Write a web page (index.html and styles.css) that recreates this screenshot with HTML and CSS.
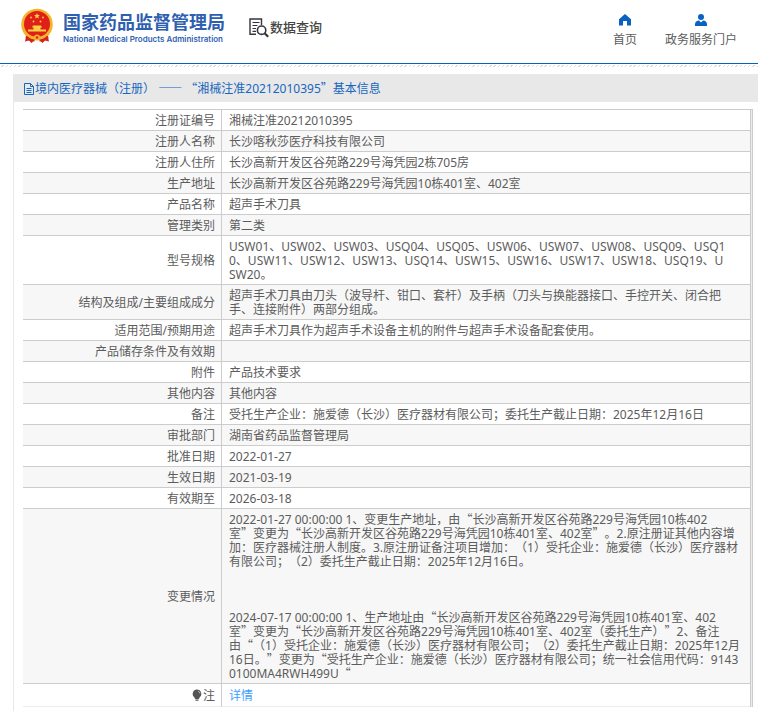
FILE: index.html
```html
<!DOCTYPE html>
<html lang="zh-CN">
<head>
    <meta charset="UTF-8">
    <meta name="viewport" content="width=device-width, initial-scale=1.0">
    <title>国家药品监督管理局 - 数据查询</title>
    <link rel="stylesheet" href="styles.css">
</head>
<body>
    <header class="header">
        <a class="logo" href="#">
            <svg class="emblem" viewBox="0 0 64 70" aria-hidden="true">
                <path d="M11 52 L8 66 L16 64 L21 69 L27 63 H37 L43 69 L48 64 L56 66 L53 52 Z" fill="#d8201c"/>
                <circle cx="32" cy="32" r="31.500" fill="#f3b32b"/>
                <circle cx="32" cy="31" r="26" fill="#de2018"/>
                <path d="M32 9 l1.600 3.800 4.200 .4 -3.200 2.800 1 4.200 -3.600 -2.200 -3.600 2.200 1 -4.200 -3.200 -2.800 4.200 -.4z" fill="#fbd043"/>
                <circle cx="20" cy="18" r="1.800" fill="#fbd043"/>
                <circle cx="44" cy="18" r="1.800" fill="#fbd043"/>
                <circle cx="25" cy="26" r="1.800" fill="#fbd043"/>
                <circle cx="39" cy="26" r="1.800" fill="#fbd043"/>
                <path d="M24 34 H40 L42 38 H22 Z M25 38 H39 V42 H50 V46 H14 V42 H25 Z" fill="#fbd043"/>
                <path d="M9 50 Q20 60 32 60 Q44 60 55 50" fill="none" stroke="#f3b32b" stroke-width="5"/>
                <circle cx="32" cy="58" r="6" fill="#f3b32b"/>
                <circle cx="32" cy="58" r="2.500" fill="#de2018"/>
                <path d="M10 56 Q18 64 27 64 M54 56 Q46 64 37 64" fill="none" stroke="#d8201c" stroke-width="4"/>
            </svg>
            <span class="logo-text">
                <span class="logo-cn">国家药品监督管理局</span>
                <span class="logo-en">National Medical Products Administration</span>
            </span>
        </a>
        <a class="search-title" href="#">
            <svg class="search-icon" viewBox="0 0 20 20" aria-hidden="true">
                <path d="M7 16.200 H1 V1 H12.500 V7" fill="none" stroke="#34343f" stroke-width="1.400"/>
                <path d="M3.500 4.500 H10.500 M3.500 7.500 H8.500 M3.500 10.500 H7 M3.500 13.300 H7" stroke="#34343f" stroke-width="1.200"/>
                <circle cx="12.600" cy="12.200" r="4.200" fill="#fff" stroke="#34343f" stroke-width="1.600"/>
                <path d="M15.600 15.200 L19.200 18.800" stroke="#34343f" stroke-width="2.200"/>
            </svg>
            <span>数据查询</span>
        </a>
        <nav class="nav">
            <a href="#">
                <svg viewBox="0 0 12 12" aria-hidden="true">
                    <path d="M6 0 L12 5.200 V11.500 H8 V7 H4 V11.500 H0 V5.200 Z" fill="#0862c1"/>
                </svg>
                <span>首页</span>
            </a>
            <a href="#">
                <svg viewBox="0 0 12 12" aria-hidden="true">
                    <circle cx="6" cy="3" r="3" fill="#0862c1"/>
                    <path d="M0 12 V10 Q.5 7 4 6.600 L6 8.500 L8 6.600 Q11.500 7 12 10 V12 Z" fill="#0862c1"/>
                </svg>
                <span>政务服务门户</span>
            </a>
        </nav>
    </header>
    <div class="hatch"></div>

    <main class="panel">
        <h1 class="panel-title">
            <svg class="doc-icon" viewBox="0 0 10 12" aria-hidden="true">
                <path d="M.5 .5 H6.500 L9.500 3.500 V11.500 H.5 Z M6.500 .5 V3.500 H9.500 M2.500 5.500 H7.500 M2.500 7.500 H7.500 M2.500 9.500 H7.500" fill="none" stroke="#1766c0" stroke-width="1"/>
            </svg>
            <span>境内医疗器械（注册） <span class="cjk">——</span> <span class="cjk">“</span>湘械注准20212010395<span class="cjk">”</span>基本信息</span>
        </h1>
        <div class="table-wrap">
            <table class="info">
                <tbody>
                    <tr><th scope="row">注册证编号</th><td>湘械注准20212010395</td></tr>
                    <tr><th scope="row">注册人名称</th><td>长沙喀秋莎医疗科技有限公司</td></tr>
                    <tr><th scope="row">注册人住所</th><td>长沙高新开发区谷苑路229号海凭园2栋705房</td></tr>
                    <tr><th scope="row">生产地址</th><td>长沙高新开发区谷苑路229号海凭园10栋401室、402室</td></tr>
                    <tr><th scope="row">产品名称</th><td>超声手术刀具</td></tr>
                    <tr><th scope="row">管理类别</th><td>第二类</td></tr>
                    <tr><th scope="row">型号规格</th><td>USW01、USW02、USW03、USQ04、USQ05、USW06、USW07、USW08、USQ09、USQ1<br>0、USW11、USW12、USW13、USQ14、USW15、USW16、USW17、USW18、USQ19、U<br>SW20。</td></tr>
                    <tr><th scope="row">结构及组成/主要组成成分</th><td>超声手术刀具由刀头（波导杆、钳口、套杆）及手柄（刀头与换能器接口、手控开关、闭合把手、连接附件）两部分组成。</td></tr>
                    <tr><th scope="row">适用范围/预期用途</th><td>超声手术刀具作为超声手术设备主机的附件与超声手术设备配套使用。</td></tr>
                    <tr><th scope="row">产品储存条件及有效期</th><td></td></tr>
                    <tr><th scope="row">附件</th><td>产品技术要求</td></tr>
                    <tr><th scope="row">其他内容</th><td>其他内容</td></tr>
                    <tr><th scope="row">备注</th><td>受托生产企业：施爱德（长沙）医疗器材有限公司；委托生产截止日期：2025年12月16日</td></tr>
                    <tr><th scope="row">审批部门</th><td>湖南省药品监督管理局</td></tr>
                    <tr><th scope="row">批准日期</th><td>2022-01-27</td></tr>
                    <tr><th scope="row">生效日期</th><td>2021-03-19</td></tr>
                    <tr><th scope="row">有效期至</th><td>2026-03-18</td></tr>
                    <tr>
                        <th scope="row">变更情况</th>
                        <td>2022-01-27 00:00:00 1、变更生产地址，由<span class="cjk">“</span>长沙高新开发区谷苑路229号海凭园10栋402<br>室<span class="cjk">”</span>变更为<span class="cjk">“</span>长沙高新开发区谷苑路229号海凭园10栋401室、402室<span class="cjk">”</span>。2.原注册证其他内容增<br>加：医疗器械注册人制度。3.原注册证备注项目增加：（1）受托企业：施爱德（长沙）医疗器材<br>有限公司；（2）委托生产截止日期：2025年12月16日。<br><br><br><br>2024-07-17 00:00:00 1、生产地址由<span class="cjk">“</span>长沙高新开发区谷苑路229号海凭园10栋401室、402<br>室<span class="cjk">”</span>变更为<span class="cjk">“</span>长沙高新开发区谷苑路229号海凭园10栋401室、402室（委托生产）<span class="cjk">”</span>2、备注<br>由<span class="cjk">“</span>（1）受托企业：施爱德（长沙）医疗器材有限公司；（2）委托生产截止日期：2025年12月<br>16日。<span class="cjk">”</span>变更为<span class="cjk">“</span>受托生产企业：施爱德（长沙）医疗器材有限公司；统一社会信用代码：9143<br>0100MA4RWH499U<span class="cjk">“</span></td>
                    </tr>
                    <tr class="note">
                        <th scope="row">
                            <span class="note-label">
                                <svg class="bulb" viewBox="0 0 10 12" aria-hidden="true">
                                    <path d="M5 .5 A4.500 4.500 0 0 1 7.500 8.600 L7 10 H3 L2.500 8.600 A4.500 4.500 0 0 1 5 .5 Z M3.500 10.500 H6.500 V11.800 H3.500 Z" fill="#555"/>
                                    <path d="M6 2 Q7.800 2.600 8 4.500" fill="none" stroke="#ccc" stroke-width=".8"/>
                                </svg>
                                注
                            </span>
                        </th>
                        <td><a href="#">详情</a></td>
                    </tr>
                </tbody>
            </table>
        </div>
    </main>
</body>
</html>
```
FILE: styles.css
```css
* {
    margin: 0;
    padding: 0;
    box-sizing: border-box;
}

body {
    display: flex;
    flex-direction: column;
    min-height: 100vh;
    background-color: #fff;
    color: #5c5c5c;
    font-family: "Noto Sans", "Noto Sans CJK SC", sans-serif;
    font-size: 12px;
    line-height: 14px;
    text-spacing-trim: space-all;
}

a {
    color: inherit;
    text-decoration: none;
}

/* full-width quotes and dashes */
.cjk {
    font-family: "Noto Sans CJK SC", sans-serif;
    line-height: 0;
}

.header {
    display: flex;
    align-items: flex-start;
    padding: 8px 21px 11px;
    border-bottom: 1px solid #0862b8;
}

.logo {
    display: flex;
    gap: 10px;
    color: #2f5fb0;
}

.emblem {
    width: 32px;
    height: 36px;
}

.logo-text {
    display: flex;
    flex-direction: column;
    padding-top: 4px;
    white-space: nowrap;
}

.logo-cn {
    font-size: 18px;
    line-height: 20px;
    font-weight: bold;
}

.logo-en {
    font-family: Inter, sans-serif;
    font-size: 8px;
    line-height: 14px;
    font-weight: 600;
}

.search-title {
    display: flex;
    gap: 1px;
    margin-left: 24px;
    padding-top: 10px;
    font-size: 13px;
    line-height: 18px;
    font-weight: 500;
    color: #444;
}

.search-icon {
    width: 20px;
    height: 20px;
}

.nav {
    display: flex;
    gap: 28px;
    height: 44px;
    margin-left: auto;
    padding-top: 6px;
}

.nav a {
    display: flex;
    flex-direction: column;
    align-items: center;
    gap: 7px;
}

.nav svg {
    width: 12px;
    height: 12px;
}

.hatch {
    height: 2px;
    margin-top: 1px;
    background: repeating-linear-gradient(135deg, #fff 0 2px, #ddd 2px 3px);
}

.panel {
    flex: 1;
    margin: 7px 0 0 13px;
    border-left: 1px solid #e8e8e8;
}

.panel-title {
    display: flex;
    align-items: center;
    height: 28px;
    padding: 2px 0 0 10px;
    background-color: #e8e8e8;
    color: #1766c0;
    font-size: 12px;
    font-weight: normal;
}

.doc-icon {
    width: 10px;
    height: 12px;
    margin-right: 1px;
}

.table-wrap {
    margin: 7px 5px 0 9px;
    padding-right: 1px;
    border-top: 1px solid #ccc;
    border-right: 1px solid #ccc;
    background-color: #ebebeb;
}

.info {
    width: 100%;
    table-layout: fixed;
    border-spacing: 0;
    border-right: 1px solid #ccc;
    background-color: #fff;
}

.info th,
.info td {
    height: 21px;
    border-bottom: 1px solid #ccc;
    vertical-align: middle;
}

.info th {
    width: 199px;
    padding: 4px 6px 2px 0;
    border-right: 1px solid #ccc;
    font-weight: normal;
    text-align: right;
}

.info td {
    padding: 4px 7px 2px;
    word-break: break-all;
}

.info tr:nth-child(even) {
    background-color: #f7f7f7;
}

.info .note {
    background-color: #fff;
}

.note th,
.note td {
    height: 23px;
    border-bottom-color: #ebebf3;
}

.note a {
    color: #409eff;
}

.note-label {
    display: flex;
    justify-content: flex-end;
    gap: 1px;
}

.bulb {
    width: 10px;
    height: 12px;
}
```
